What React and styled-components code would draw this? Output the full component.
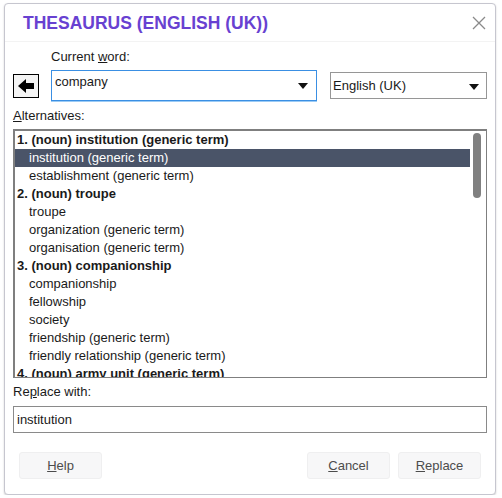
import React from 'react';
import styled, { createGlobalStyle } from 'styled-components';

const GlobalStyle = createGlobalStyle`
  html, body {
    margin: 0;
    padding: 0;
    background: #ffffff;
    font-family: "Liberation Sans", Arial, sans-serif;
    font-size: 13px;
    color: #1a1a1a;
  }
`;

const Dialog = styled.div`
  margin: 3px 0 0 4px;
  width: 490px;
  height: 490px;
  border: 1px solid #c6c6cf;
  border-radius: 4px;
  box-shadow: 0 1px 2px rgba(0, 0, 0, 0.18);
  background: #ffffff;
  display: flex;
  flex-direction: column;
`;

const Header = styled.div`
  height: 37px;
  display: flex;
  align-items: center;
  justify-content: space-between;
  padding: 0 8px 0 18px;
  border-bottom: 1px solid #f3f3f3;
`;

const Title = styled.div`
  font-size: 17.5px;
  line-height: 20px;
  font-weight: bold;
  color: #6841d1;
`;

const CloseButton = styled.div`
  width: 16px;
  height: 16px;
  display: flex;
  align-items: center;
  justify-content: center;
`;

const Body = styled.div`
  padding: 0 8px;
  display: flex;
  flex-direction: column;
`;

const Label = styled.div`
  line-height: 16px;
  margin-top: ${p => p.$top}px;
  padding-left: ${p => p.$indent || 0}px;
  color: #1a1a1a;
  u { text-decoration: underline; }
`;

const WordRow = styled.div`
  margin-top: 5px;
  height: 31px;
  display: flex;
  align-items: center;
`;

const BackButton = styled.div`
  width: 24px;
  height: 22px;
  border: 1px solid #000;
  background: #f4f4f4;
  display: flex;
  align-items: center;
  justify-content: center;
  margin-top: 1px;
`;

const WordCombo = styled.div`
  margin-left: 12px;
  width: 253px;
  height: 29px;
  border: 1px solid #3a8fe3;
  box-shadow: 0 1px 0 0 #9ccbf5;
  display: flex;
  justify-content: space-between;
  padding: 0 8px 0 3px;
  box-sizing: content-box;
  line-height: 22px;
`;

const LangSelect = styled.div`
  margin-left: 13px;
  flex: 1;
  height: 25px;
  border: 1px solid #969696;
  display: flex;
  align-items: center;
  justify-content: space-between;
  padding: 0 7px 0 2px;
`;

const Arrow = styled.span`
  display: flex;
  align-items: center;
  padding-top: ${p => p.$top || 0}px;
`;

const ListBox = styled.div`
  margin-top: 5px;
  height: 246px;
  border: 1px solid #7f7f7f;
  border-top-width: 2px;
  border-left-width: 2px;
  display: flex;
  overflow: hidden;
`;

const Rows = styled.div`
  flex: 1;
`;

const Row = styled.div`
  height: 18px;
  line-height: 18px;
  white-space: nowrap;
  padding-left: ${p => (p.$heading ? 2 : 14)}px;
  font-weight: ${p => (p.$heading ? 'bold' : 'normal')};
  background: ${p => (p.$selected ? '#4a5468' : 'transparent')};
  color: ${p => (p.$selected ? '#ffffff' : '#1a1a1a')};
`;

const ScrollTrack = styled.div`
  width: 16px;
  padding: 2px 0 0 3px;
  box-sizing: border-box;
`;

const ScrollThumb = styled.div`
  width: 8px;
  height: 65px;
  border-radius: 4px;
  background: #808080;
`;

const TextInput = styled.div`
  margin-top: 6px;
  height: 25px;
  line-height: 25px;
  border: 1px solid #8a8a8a;
  padding-left: 3px;
`;

const Buttons = styled.div`
  margin-top: 19px;
  display: flex;
  padding: 0 6px;
  gap: 8px;
`;

const Button = styled.div`
  width: 81px;
  height: 25px;
  line-height: 25px;
  text-align: center;
  background: #f7f7f8;
  border: 1px solid #efeff0;
  border-radius: 3px;
  color: #4c4c4c;
  margin-left: ${p => (p.$push ? 'auto' : '0')};
`;

const Caret = ({ top }) => (
  <Arrow $top={top}>
    <svg width="10" height="6" viewBox="0 0 10 6">
      <polygon points="0,0 10,0 5,6" fill="#111" />
    </svg>
  </Arrow>
);

const rows = [
  { text: '1. (noun) institution (generic term)', heading: true },
  { text: 'institution (generic term)', selected: true },
  { text: 'establishment (generic term)' },
  { text: '2. (noun) troupe', heading: true },
  { text: 'troupe' },
  { text: 'organization (generic term)' },
  { text: 'organisation (generic term)' },
  { text: '3. (noun) companionship', heading: true },
  { text: 'companionship' },
  { text: 'fellowship' },
  { text: 'society' },
  { text: 'friendship (generic term)' },
  { text: 'friendly relationship (generic term)' },
  { text: '4. (noun) army unit (generic term)', heading: true },
];

const App = () => {
  return (
    <>
      <GlobalStyle />
      <Dialog>
        <Header>
          <Title>THESAURUS (ENGLISH (UK))</Title>
          <CloseButton>
            <svg width="14" height="14" viewBox="0 0 14 14">
              <path d="M1 1 L13 13 M13 1 L1 13" stroke="#8a8a8a" strokeWidth="1.3" />
            </svg>
          </CloseButton>
        </Header>
        <Body>
          <Label $top={7} $indent={38}>
            Current <u>w</u>ord:
          </Label>
          <WordRow>
            <BackButton>
              <svg width="18" height="14" viewBox="0 0 18 14">
                <polygon points="1,7 9,0 9,4 17,4 17,10 9,10 9,14" fill="#000" />
              </svg>
            </BackButton>
            <WordCombo>
              <span>company</span>
              <Caret top={0} />
            </WordCombo>
            <LangSelect>
              <span>English (UK)</span>
              <Caret top={2} />
            </LangSelect>
          </WordRow>
          <Label $top={7}>
            <u>A</u>lternatives:
          </Label>
          <ListBox>
            <Rows>
              {rows.map((r, i) => (
                <Row key={i} $heading={r.heading} $selected={r.selected}>
                  {r.text}
                </Row>
              ))}
            </Rows>
            <ScrollTrack>
              <ScrollThumb />
            </ScrollTrack>
          </ListBox>
          <Label $top={6}>
            Re<u>p</u>lace with:
          </Label>
          <TextInput>institution</TextInput>
          <Buttons>
            <Button><u>H</u>elp</Button>
            <Button $push><u>C</u>ancel</Button>
            <Button><u>R</u>eplace</Button>
          </Buttons>
        </Body>
      </Dialog>
    </>
  );
};

export default App;
